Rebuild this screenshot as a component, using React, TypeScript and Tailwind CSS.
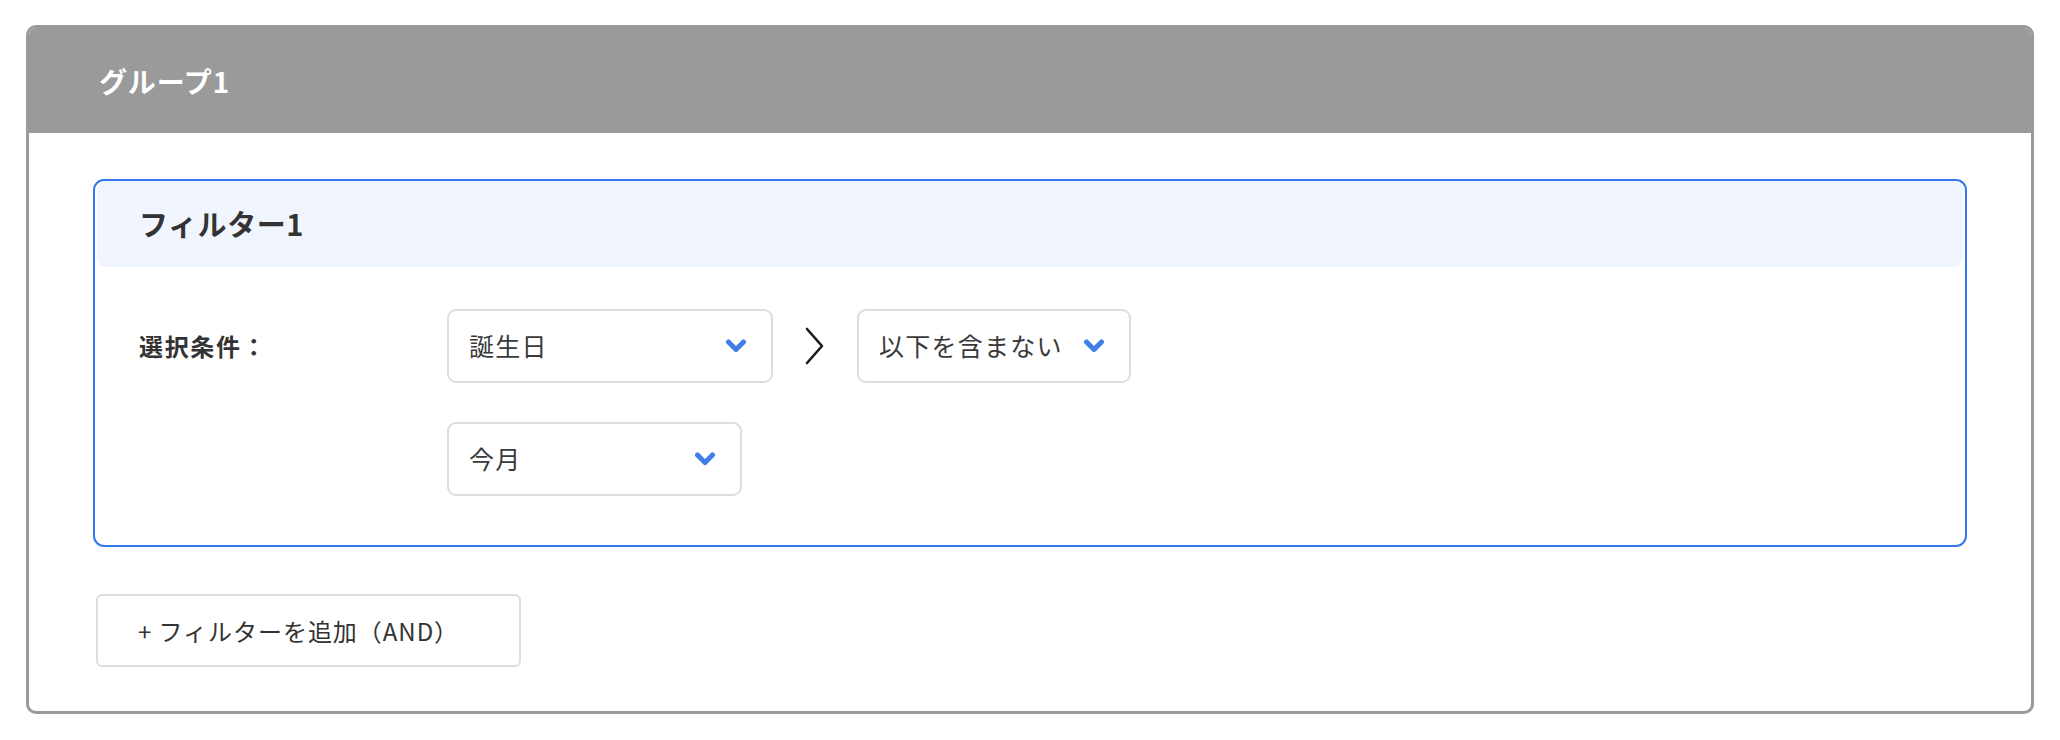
import React from "react";

function ChevronDown() {
  return (
    <svg className="w-[22px] h-[16px] shrink-0" viewBox="0 0 22 16" fill="none">
      <path d="M3.5 4 L11 11.5 L18.5 4" stroke="#3f7fe6" strokeWidth="5" strokeLinecap="round" strokeLinejoin="round" />
    </svg>
  );
}

function ArrowRight() {
  return (
    <svg className="w-[24px] h-[38px] shrink-0" viewBox="0 0 24 38" fill="none">
      <path d="M4 2 L19 19 L4 36" stroke="#1a1a1a" strokeWidth="2.6" strokeLinecap="round" strokeLinejoin="round" />
    </svg>
  );
}

function Select({ label, className }: { label: string; className?: string }) {
  return (
    <div
      className={
        "h-[74px] flex items-center justify-between gap-[20px] pl-[20px] pr-[24px] bg-white border-2 border-[#dddddd] rounded-[9px] text-[25px] text-[#3a3a3a] tracking-[0.05em] " +
        (className ?? "")
      }
    >
      <span>{label}</span>
      <ChevronDown />
    </div>
  );
}

export default function App() {
  return (
    <div className="w-[2060px] h-[740px] bg-white pt-[25px] px-[26px] font-['Noto_Sans_CJK_JP','Noto_Sans',sans-serif]">
      <div className="border-[3px] border-[#9a9a9a] rounded-[10px] overflow-hidden bg-white">
        {/* Group header */}
        <div className="h-[105px] bg-[#9a9a9a] flex items-center pl-[70px]">
          <h2 className="text-[28px] font-bold text-white tracking-[0.03em]">グループ1</h2>
        </div>

        <div className="px-[64px] pt-[46px] pb-[44px]">
          {/* Filter card */}
          <div className="border-2 border-[#3478f0] rounded-[11px] pb-[49px]">
            <div className="mx-[2px] h-[86px] bg-[#f1f6fe] rounded-[9px] flex items-center pl-[42px]">
              <h3 className="text-[29px] font-bold text-[#333333] tracking-[0.02em]">フィルター1</h3>
            </div>

            <div className="flex pt-[42px] pl-[44px]">
              <div className="w-[308px] h-[74px] flex items-center text-[24px] font-bold text-[#333333] tracking-[0.07em]">
                選択条件：
              </div>
              <div className="flex flex-col gap-[39px]">
                <div className="flex items-center gap-[30px]">
                  <Select label="誕生日" className="w-[326px]" />
                  <ArrowRight />
                  <Select label="以下を含まない" />
                </div>
                <Select label="今月" className="w-[295px]" />
              </div>
            </div>
          </div>

          {/* Add filter */}
          <button className="mt-[47px] ml-[3px] w-[425px] h-[73px] bg-white border-2 border-[#dddddd] rounded-[6px] flex items-center pl-[40px] text-[24px] text-[#333333] tracking-[0.04em]">
            + フィルターを追加（AND）
          </button>
        </div>
      </div>
    </div>
  );
}
